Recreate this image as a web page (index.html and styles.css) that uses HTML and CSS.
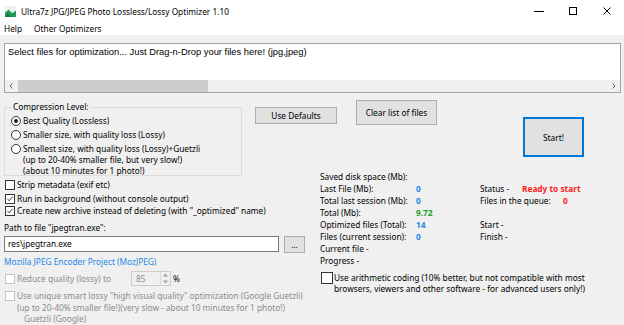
FILE: index.html
```html
<!DOCTYPE html>
<html>
<head>
    <title>Ultra7z JPG/JPEG Photo Lossless/Lossy Optimizer 1.10</title>
    <link rel="stylesheet" href="styles.css">
</head>
<body>
    <div class="titlebar">
        <svg class="app-icon" viewBox="0 0 12 12">
            <rect x="0" y="0" width="12" height="12" fill="#e8f4ec"/>
            <polygon points="0,12 0,7 4,4 8,8 12,5 12,12" fill="#1f9a55"/>
            <polygon points="0,12 3,8 7,12" fill="#137a3f"/>
        </svg>
        <span class="title">Ultra7z JPG/JPEG Photo Lossless/Lossy Optimizer 1.10</span>
        <span class="winbtn">
            <svg width="10" height="10" viewBox="0 0 10 10"><line x1="0" y1="5.5" x2="10" y2="5.5" stroke="#000" stroke-width="1"/></svg>
        </span>
        <span class="winbtn">
            <svg width="10" height="10" viewBox="0 0 10 10"><rect x="1.5" y="1.5" width="7" height="7" fill="none" stroke="#000" stroke-width="1"/></svg>
        </span>
        <span class="winbtn">
            <svg width="10" height="10" viewBox="0 0 10 10"><path d="M1.5 1.5 L8.5 8.5 M8.5 1.5 L1.5 8.5" stroke="#000" stroke-width="1"/></svg>
        </span>
    </div>
    <div class="menubar">
        <span class="menu-item">Help</span>
        <span class="menu-item">Other Optimizers</span>
    </div>

    <div class="client">
        <div class="dropbox">
            <div class="droptext">Select files for optimization... Just Drag-n-Drop your files here! (jpg,jpeg)</div>
            <div class="hscroll">
                <span class="sarrow">
                    <svg width="5" height="6" viewBox="0 0 5 6"><path d="M3.5 0.5 L1 3 L3.5 5.5" fill="none" stroke="#606060" stroke-width="1"/></svg>
                </span>
                <div class="track"><div class="thumb"></div></div>
                <span class="sarrow">
                    <svg width="5" height="6" viewBox="0 0 5 6"><path d="M1.5 0.5 L4 3 L1.5 5.5" fill="none" stroke="#606060" stroke-width="1"/></svg>
                </span>
            </div>
        </div>

        <div class="form">
            <div class="top-left">
                <fieldset class="group">
                    <legend>Compression Level:</legend>
                    <div class="radio-row"><span class="rb checked"></span><span>Best Quality (Lossless)</span></div>
                    <div class="radio-row"><span class="rb"></span><span>Smaller size, with quality loss (Lossy)</span></div>
                    <div class="radio-row"><span class="rb"></span><span>Smallest size, with quality loss (Lossy)+Guetzli<br>(up to 20-40% smaller file, but very slow!)<br>(about 10 minutes for 1 photo!)</span></div>
                </fieldset>
                <button class="btn btn-defaults">Use Defaults</button>
            </div>

            <div class="top-right">
                <button class="btn btn-clear">Clear list of files</button>
                <button class="btn btn-start">Start!</button>
            </div>

            <div class="bottom-left">
                <div class="check-row row-strip"><span class="cb"></span><span>Strip metadata (exif etc)</span></div>
                <div class="check-row row-run"><span class="cb checked"><svg viewBox="0 0 10 10"><path d="M1.8 4.8 L4 7.2 L8.2 2.2" fill="none" stroke="#222" stroke-width="1.1"/></svg></span><span>Run in background (without console output)</span></div>
                <div class="check-row"><span class="cb checked"><svg viewBox="0 0 10 10"><path d="M1.8 4.8 L4 7.2 L8.2 2.2" fill="none" stroke="#222" stroke-width="1.1"/></svg></span><span>Create new archive instead of deleting (with "_optimized" name)</span></div>
                <div class="path-label">Path to file "jpegtran.exe":</div>
                <div class="path-row">
                    <div class="textbox">res\jpegtran.exe</div>
                    <button class="btn btn-browse">...</button>
                </div>
                <div class="link">Mozilla JPEG Encoder Project (MozJPEG)</div>
                <div class="quality-row disabled">
                    <span class="cb"></span>
                    <span class="quality-label">Reduce quality (lossy) to</span>
                    <div class="spin">
                        <span class="spin-value">85</span>
                        <span class="spin-arrows">
                            <svg width="5" height="4" viewBox="0 0 5 4"><path d="M0 3.5 L2.5 0.5 L5 3.5 Z" fill="#a0a0a0"/></svg>
                            <svg width="5" height="4" viewBox="0 0 5 4"><path d="M0 0.5 L2.5 3.5 L5 0.5 Z" fill="#a0a0a0"/></svg>
                        </span>
                    </div>
                    <span class="percent">%</span>
                </div>
                <div class="check-row guetzli disabled"><span class="cb"></span><span>Use unique smart lossy "high visual quality" optimization (Google Guetzli)<br>(up to 20-40% smaller file!)(very slow - about 10 minutes for 1 photo!)</span></div>
                <div class="guetzli-note disabled">Guetzli (Google)</div>
            </div>

            <div class="bottom-right">
                <div class="stats">
                    <span class="s-label">Saved disk space (Mb):</span><span></span><span></span><span></span>
                    <span class="s-label">Last File (Mb):</span><span class="v-blue">0</span><span>Status -</span><span class="v-red">Ready to start</span>
                    <span class="s-label">Total last session (Mb):</span><span class="v-blue">0</span><span class="wide">Files in the queue:</span><span class="v-red queue">0</span>
                    <span class="s-label">Total (Mb):</span><span class="v-green">9.72</span><span></span><span></span>
                    <span class="s-label">Optimized files (Total):</span><span class="v-blue">14</span><span>Start -</span><span></span>
                    <span class="s-label">Files (current session):</span><span class="v-blue">0</span><span>Finish -</span><span></span>
                    <span class="s-label">Current file -</span><span></span><span></span><span></span>
                    <span class="s-label">Progress -</span><span></span><span></span><span></span>
                </div>
                <div class="check-row arith"><span class="cb"></span><span>Use arithmetic coding (10% better, but not compatible with most<br>browsers, viewers and other software - for advanced users only!)</span></div>
            </div>
        </div>
    </div>
</body>
</html>
```

FILE: styles.css
```css
body { margin: 0; width: 624px; height: 325px; overflow: hidden; background: #f0f0f0; font-family: "Noto Sans", sans-serif; font-size: 8.3px; color: #000; }

.titlebar { height: 22px; background: #fff; display: flex; align-items: center; }
.app-icon { width: 11px; height: 11px; margin: 0 5px 0 5px; }
.title { flex: 1; }
.winbtn { width: 34px; height: 22px; display: flex; align-items: center; justify-content: center; }

.menubar { height: 13px; background: #fff; display: flex; align-items: center; padding-left: 4px; }
.menu-item { margin-right: 12px; }

.client { padding: 8px 3px 0 4px; }
.dropbox { height: 48px; border: 1px solid #a5a5a5; background: #fff; display: flex; flex-direction: column; }
.droptext { flex: 1; padding: 2px 3px; font-family: "Liberation Sans", sans-serif; font-size: 9.35px; line-height: 12px; }
.hscroll { height: 12px; background: #f0f0f0; display: flex; align-items: stretch; }
.sarrow { width: 13px; display: flex; align-items: center; justify-content: center; }
.track { flex: 1; display: flex; }
.thumb { width: 190px; background: #cdcdcd; }

.form { display: grid; grid-template-columns: 312px 1fr; grid-template-rows: 82px auto; }

.top-left { display: flex; align-items: flex-start; }
.top-left > * { flex-shrink: 0; }
.group { margin: 8px 0 0 0; padding: 0 4px 0 7px; width: 238px; height: 75px; box-sizing: border-box; border: 1px solid #dcdcdc; }
.group legend { padding: 0 1px; line-height: 12px; }
.radio-row { display: flex; align-items: flex-start; line-height: 11px; margin-top: 3px; margin-left: -1px; }
.radio-row:first-of-type { margin-top: 2px; }
.rb { width: 10px; height: 10px; box-sizing: border-box; border: 1px solid #333; border-radius: 50%; background: #fff; margin: 0.5px 2px 0 0; display: flex; align-items: center; justify-content: center; flex-shrink: 0; }
.rb.checked::after { content: ""; width: 4px; height: 4px; border-radius: 50%; background: #222; }

.btn { font-family: inherit; font-size: 8.3px; color: #000; background: #e1e1e1; border: 1px solid #adadad; padding: 0; box-sizing: border-box; }
.btn-defaults { width: 82px; height: 17px; margin: 14px 0 0 13px; }
.top-right { display: flex; align-items: flex-start; }
.btn-clear { width: 81px; height: 25px; margin: 7px 0 0 40px; }
.btn-start { width: 61px; height: 40px; margin: 24px 0 0 86px; border: 2px solid #0078d7; }

.check-row { display: flex; align-items: flex-start; line-height: 12px; }
.cb { width: 10px; height: 10px; box-sizing: border-box; border: 1px solid #333; background: #fff; margin: 1px 2px 0 1px; flex-shrink: 0; display: flex; }
.cb svg { width: 8px; height: 8px; }
.row-strip { margin-top: 4px; }
.row-run { margin-top: 2px; }
.path-label { margin-top: 5px; line-height: 12px; }
.path-row { display: flex; margin-top: 2px; }
.textbox { width: 275px; height: 16px; box-sizing: border-box; border: 1px solid #7a7a7a; background: #fff; padding: 0 3px; line-height: 14px; }
.btn-browse { width: 21px; height: 17px; margin-left: 5px; line-height: 10px; }
.link { color: #1e88e5; line-height: 12px; margin-top: 3px; }

.disabled { color: #8c8c8c; }
.disabled .cb { border-color: #c4c4c4; }
.quality-row { display: flex; align-items: center; height: 15px; margin-top: 3px; }
.quality-row .cb { margin-top: 0; }
.quality-label { width: 114px; }
.spin { width: 40px; height: 15px; box-sizing: border-box; border: 1px solid #cccccc; background: #f0f0f0; display: flex; align-items: center; }
.spin-value { flex: 1; padding-left: 4px; }
.spin-arrows { width: 9px; height: 13px; display: flex; flex-direction: column; align-items: center; justify-content: space-around; border-left: 1px solid #dcdcdc; }
.percent { margin-left: 2px; color: #000; }
.guetzli { margin-top: 4px; line-height: 11.5px; }
.guetzli-note { line-height: 11.5px; padding-left: 20px; }

.bottom-right { padding-left: 4px; margin-top: -4px; }
.stats { display: grid; grid-template-columns: 96px 64px 42px 1fr; grid-auto-rows: 12px; line-height: 12px; }
.v-blue { color: #1e88e5; font-weight: bold; }
.v-green { color: #22a02e; font-weight: bold; }
.v-red { color: #ff2020; font-weight: bold; }
.wide { white-space: nowrap; }
.queue { padding-left: 41px; }
.arith { margin-top: 5px; line-height: 11px; }
.arith .cb { width: 12px; height: 12px; margin: 0 1px 0 1px; }
```
